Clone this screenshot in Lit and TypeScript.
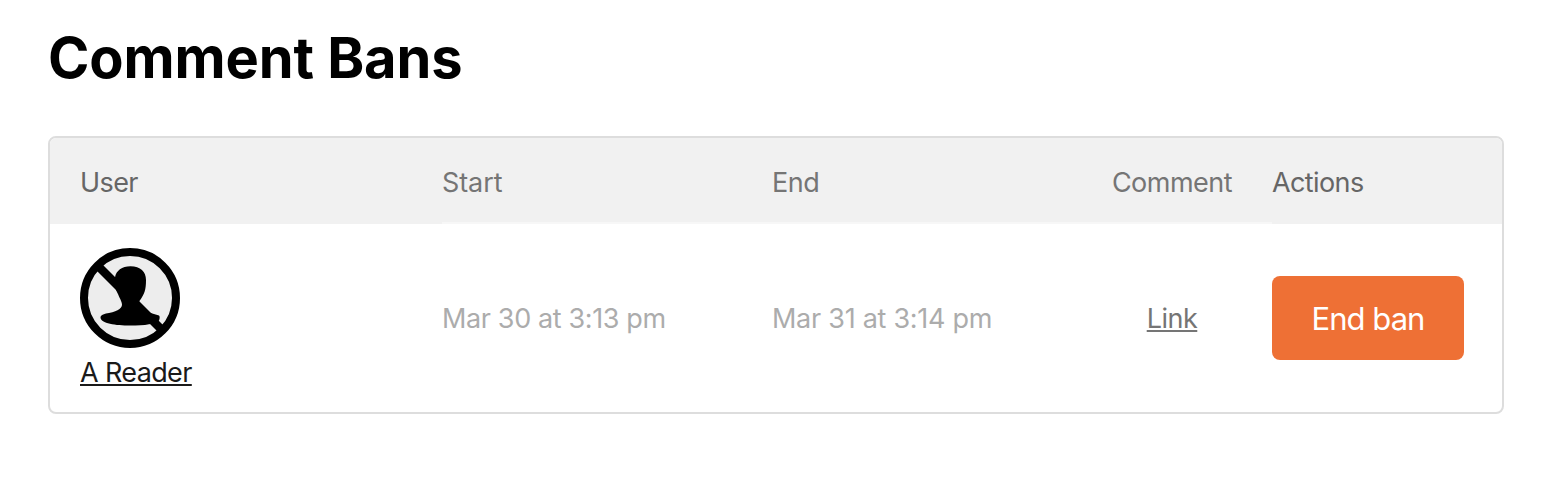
import { LitElement, html, css } from "lit";
import { customElement, property } from "lit/decorators.js";

interface Ban {
  user: string;
  start: string;
  end: string;
}

@customElement("banned-avatar")
class BannedAvatar extends LitElement {
  static styles = css`
    :host {
      display: block;
      width: 100px;
      height: 100px;
    }
    .icon {
      display: block;
    }
  `;

  render() {
    return html`
      <svg class="icon" width="100" height="100" viewBox="0 0 100 100" aria-hidden="true">
        <circle cx="50" cy="50" r="46" fill="#ededed" stroke="#000" stroke-width="8" />
        <path d="M19.5 19.5 L80.5 80.5" stroke="#000" stroke-width="8.5" />
        <path
          d="M50.500 18.200 C60.500 18.200 66 23.500 66 32 C66 42 64.500 46 59.300 53.300 C58.500 55 59 58 61 60 C66 64 72 65.500 79 67.600 C79.900 68 79.900 71 79 72.500 C76 76 65 77.600 50 77.600 C36 77.600 20.500 75.500 20.500 69.500 C20.500 66.500 25 65.800 29 65 C34 63.800 37 63 39.500 61 C42 59 42.500 57 41.600 54.500 C40.800 52 40 50.500 39 48.500 C38 45.500 36 43 35.500 40 C34.900 37 34.700 33 35 29.500 C36 22.500 42 18.200 50.500 18.200 Z"
        />
      </svg>
    `;
  }
}

@customElement("ban-table")
class BanTable extends LitElement {
  @property({ attribute: false }) bans: Ban[] = [];

  static styles = css`
    :host {
      display: block;
      border: 2px solid #dddddd;
      border-radius: 8px;
      overflow: hidden;
      font-size: 27px;
      line-height: 36px;
    }
    .row {
      display: grid;
      grid-template-columns: 392px 330px 320px 180px 230px;
      align-items: center;
    }
    .head {
      background: #f1f1f1;
      height: 86px;
      align-items: stretch;
      color: #757575;
    }
    .cell {
      box-sizing: border-box;
    }
    .head .cell {
      padding-top: 27px;
    }
    .head .mid {
      border-bottom: 2px solid #f7f7f7;
    }
    .head .edge {
      color: #666666;
    }
    .cell.user {
      padding-left: 30px;
    }
    .body .user {
      padding-top: 3px;
    }
    .cell.comment {
      padding-right: 20px;
      text-align: center;
    }
    .body {
      height: 188px;
    }
    .body .date,
    .body .comment {
      padding-top: 2px;
    }
    .date {
      color: #acacac;
    }
    .who {
      display: inline-block;
      margin-top: 7px;
      color: #1a1a1a;
    }
    .link {
      color: #757575;
    }
    a {
      text-decoration: underline;
      text-decoration-thickness: 2px;
      text-underline-offset: 2px;
      text-decoration-skip-ink: none;
    }
    .t-user { letter-spacing: -0.6px; }
    .t-start { letter-spacing: -0.1px; }
    .t-end { letter-spacing: -0.5px; }
    .t-comment { letter-spacing: -0.5px; }
    .t-actions { letter-spacing: -0.6px; }
    .t-date { letter-spacing: -0.37px; }
    .t-date2 { letter-spacing: -0.27px; }
    .t-link { letter-spacing: -0.5px; }
    .t-who { letter-spacing: -0.63px; }
    .button {
      display: block;
      width: 192px;
      height: 84px;
      padding: 2px 0 0;
      border: 0;
      border-radius: 8px;
      background: #ee7035;
      color: #fff;
      font: 400 31px/40px Inter, sans-serif;
      letter-spacing: -0.95px;
    }
  `;

  render() {
    return html`
      <div class="row head">
        <div class="cell user edge"><span class="t-user">User</span></div>
        <div class="cell mid"><span class="t-start">Start</span></div>
        <div class="cell mid"><span class="t-end">End</span></div>
        <div class="cell mid comment"><span class="t-comment">Comment</span></div>
        <div class="cell edge"><span class="t-actions">Actions</span></div>
      </div>
      ${this.bans.map(
        (ban) => html`
          <div class="row body">
            <div class="cell user">
              <banned-avatar></banned-avatar>
              <a class="who t-who">${ban.user}</a>
            </div>
            <div class="cell date"><span class="t-date">${ban.start}</span></div>
            <div class="cell date"><span class="t-date2">${ban.end}</span></div>
            <div class="cell comment"><a class="link t-link">Link</a></div>
            <div class="cell"><button class="button" type="button">End ban</button></div>
          </div>
        `
      )}
    `;
  }
}

@customElement("app-root")
class AppRoot extends LitElement {
  static styles = css`
    :host {
      display: block;
      box-sizing: border-box;
      min-height: 486px;
      padding: 24px 42px 0 48px;
      background: #fff;
      font-family: Inter, sans-serif;
    }
    .title {
      margin: 0 0 44px;
      font-size: 56px;
      line-height: 68px;
      font-weight: 700;
      letter-spacing: -0.1px;
      color: #000;
    }
  `;

  private bans: Ban[] = [
    { user: "A Reader", start: "Mar 30 at 3:13 pm", end: "Mar 31 at 3:14 pm" },
  ];

  render() {
    return html`
      <h1 class="title">Comment Bans</h1>
      <ban-table .bans=${this.bans}></ban-table>
    `;
  }
}
